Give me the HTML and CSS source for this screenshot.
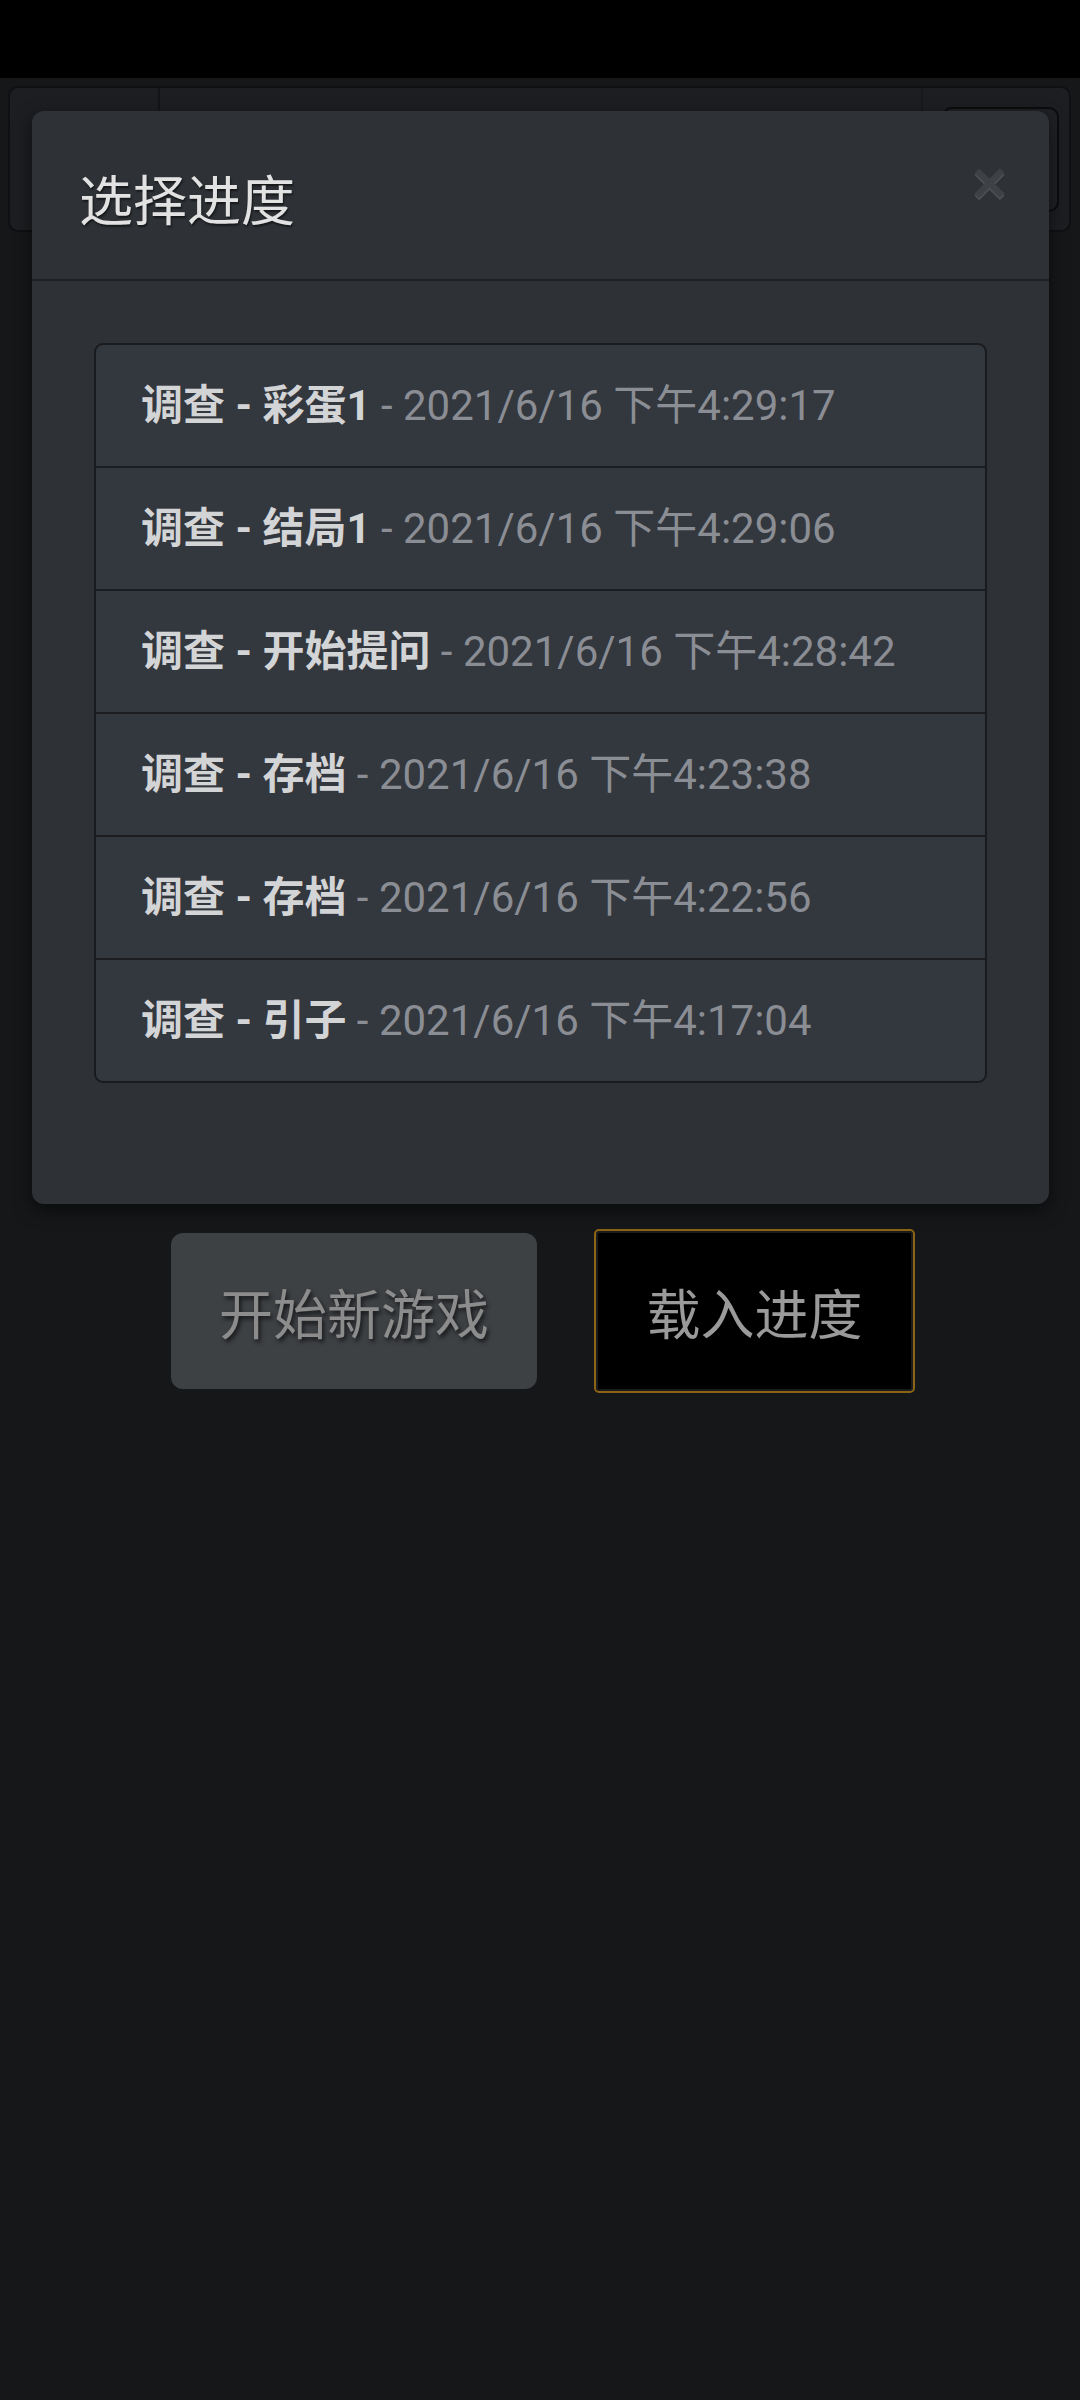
FILE: index.html
```html
<!DOCTYPE html>
<html lang="zh-CN">
<head>
<meta charset="utf-8">
<title>选择进度</title>
<link rel="stylesheet" href="styles.css">
</head>
<body>
<div class="statusbar"></div>
<div class="page">
  <div class="topbar">
    <div class="tb-left"></div>
    <div class="tb-mid"></div>
    <div class="tb-right"><div class="tb-btn"></div></div>
  </div>
  <div class="actions">
    <button class="btn btn-new">开始新游戏</button>
    <button class="btn btn-load">载入进度</button>
  </div>
</div>

<div class="modal">
  <div class="modal-header">
    <h4 class="modal-title">选择进度</h4>
    <span class="close">×</span>
  </div>
  <div class="modal-body">
    <ul class="list">
      <li class="item"><b>调查 - 彩蛋1</b> - 2021/6/16 下午4:29:17</li>
      <li class="item"><b>调查 - 结局1</b> - 2021/6/16 下午4:29:06</li>
      <li class="item"><b>调查 - 开始提问</b> - 2021/6/16 下午4:28:42</li>
      <li class="item"><b>调查 - 存档</b> - 2021/6/16 下午4:23:38</li>
      <li class="item"><b>调查 - 存档</b> - 2021/6/16 下午4:22:56</li>
      <li class="item"><b>调查 - 引子</b> - 2021/6/16 下午4:17:04</li>
    </ul>
  </div>
</div>
</body>
</html>
```

FILE: styles.css
```css
html, body {
  margin: 0;
  padding: 0;
}
body {
  width: 1080px;
  height: 2400px;
  background: #151719;
  font-family: Roboto, "Noto Sans CJK SC", sans-serif;
  position: relative;
  overflow: hidden;
}
.statusbar {
  height: 78px;
  background: #000;
}
.page {
  padding: 8px 8px 0 8px;
}
.topbar {
  margin-right: 1px;
  background: #1c1e21;
  border: 2px solid #0f1011;
  border-radius: 10px;
  display: flex;
  box-sizing: border-box;
  height: 146px;
}
.tb-left {
  width: 148px;
  border-right: 2px solid #141517;
}
.tb-mid {
  flex: 1;
  border-right: 2px solid #17181a;
}
.tb-right {
  width: 136px;
  display: flex;
  align-items: center;
  justify-content: flex-end;
  padding-right: 10px;
}
.tb-btn {
  width: 113px;
  height: 101px;
  background: #1f2124;
  border: 2px solid #0b0c0d;
  border-radius: 10px;
}
.actions {
  margin-top: 997px;
  display: flex;
  justify-content: center;
  align-items: center;
  gap: 57px;
  padding-left: 6px;
}
.btn {
  font-family: Roboto, "Noto Sans CJK SC", sans-serif;
  font-size: 54px;
  box-sizing: border-box;
}
.btn-new {
  width: 366px;
  height: 156px;
  background: #3e4144;
  border: none;
  border-radius: 12px;
  color: #8c8c8c;
  text-shadow: 2px 3px 4px #161719;
}
.btn-load {
  width: 321px;
  height: 164px;
  background: #000;
  border: 2px solid #8b6415;
  border-radius: 5px;
  box-shadow: inset 0 0 0 2px #1c1c1c;
  color: #9a9a9a;
}
.modal {
  position: absolute;
  top: 111px;
  left: 32px;
  width: 1017px;
  background: #2e3236;
  border-radius: 12px;
  box-shadow: 0 6px 18px rgba(0, 0, 0, 0.55);
}
.modal-header {
  height: 168px;
  border-bottom: 2px solid #1e2124;
  display: flex;
  align-items: center;
  justify-content: space-between;
  padding: 0 42px 0 47px;
}
.modal-title {
  margin: 0;
  font-size: 54px;
  font-weight: 400;
  color: #e2e2e2;
  text-shadow: 1px 2px 2px #16181a;
  padding-top: 4px;
}
.close {
  font-family: "Liberation Sans", sans-serif;
  font-size: 60px;
  font-weight: 700;
  line-height: 1;
  color: #3e4246;
  text-shadow: 0 2px 0 #4f5358;
  margin-top: -24px;
}
.modal-body {
  padding: 62px 62px 121px 62px;
}
.list {
  list-style: none;
  margin: 0;
  padding: 0;
  border: 2px solid #191b1e;
  border-radius: 9px;
  overflow: hidden;
  background: #33373e;
}
.item {
  height: 123px;
  box-sizing: border-box;
  display: flex;
  align-items: center;
  padding-left: 45px;
  padding-bottom: 9px;
  font-size: 42px;
  color: #8a8d93;
  white-space: pre;
  border-top: 2px solid #1b1d20;
}
.item:first-child {
  height: 121px;
  border-top: none;
}
.item b {
  color: #d3d4d6;
  font-weight: 700;
}
```
